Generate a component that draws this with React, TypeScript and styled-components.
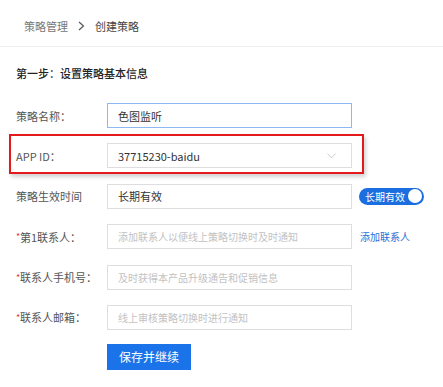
import React from "react";
import styled, { createGlobalStyle } from "styled-components";

const Global = createGlobalStyle`
  html, body { margin: 0; padding: 0; background: #fff; }
  body { font-family: "Noto Sans CJK SC", "Noto Sans", sans-serif; }
  * { box-sizing: border-box; }
`;

const Page = styled.div`
  width: 443px;
  height: 387px;
  background: #fff;
  overflow: hidden;
`;

const Header = styled.div`
  height: 47px;
  border-bottom: 1px solid #eeeeee;
  display: flex;
  align-items: center;
  padding: 5px 0 0 24px;
  font-size: 11px;
  gap: 9px;
`;

const Crumb = styled.span<{ $current?: boolean }>`
  color: ${(p) => (p.$current ? "#444" : "#777")};
`;

const Sep = styled.svg`
  width: 7px;
  height: 10px;
  margin: 0 1px;
`;

const Body = styled.div`
  padding: 18px 0 0 16px;
`;

const StepTitle = styled.div`
  font-size: 11px;
  color: #222;
  font-weight: 500;
  height: 16px;
  line-height: 16px;
  margin-bottom: 22px;
`;

const Form = styled.div`
  display: flex;
  flex-direction: column;
  gap: 15.4px;
`;

const Row = styled.div<{ $highlight?: boolean }>`
  position: relative;
  display: flex;
  align-items: center;
  height: 25px;
  width: ${(p) => (p.$highlight ? "336px" : "auto")};
  &::after {
    content: "";
    display: ${(p) => (p.$highlight ? "block" : "none")};
    position: absolute;
    left: -7px;
    right: -12px;
    top: -9px;
    bottom: -6px;
    border: 2px solid #e4191c;
    box-shadow: 2px 3px 4px rgba(0, 0, 0, 0.18);
    pointer-events: none;
  }
`;

const Label = styled.div`
  width: 91px;
  flex: none;
  font-size: 11px;
  color: #555;
  display: flex;
  align-items: center;
`;

const Star = styled.span`
  color: #e23a3a;
  font-size: 9px;
  width: 4px;
  line-height: 1;
`;

const Field = styled.div<{ $focus?: boolean; $placeholder?: boolean }>`
  width: 245px;
  height: 25px;
  flex: none;
  border: 1px solid ${(p) => (p.$focus ? "#8db8f2" : "#dedede")};
  background: #fff;
  display: flex;
  align-items: center;
  justify-content: space-between;
  padding: 0 12px 0 10px;
  font-size: ${(p) => (p.$placeholder ? "10px" : "11px")};
  color: ${(p) => (p.$placeholder ? "#c2c2c2" : "#333")};
`;

const Chevron = styled.svg`
  width: 9px;
  height: 6px;
  margin-right: 3px;
`;

const Toggle = styled.div`
  margin-left: 7px;
  width: 65px;
  height: 17px;
  border-radius: 9px;
  background: #1a6ee0;
  display: flex;
  align-items: center;
  justify-content: space-between;
  padding: 0 2px 0 6px;
  color: #fff;
  font-size: 10px;
`;

const Knob = styled.span`
  width: 14px;
  height: 14px;
  border-radius: 50%;
  background: #fff;
`;

const Link = styled.span`
  margin-left: 8px;
  font-size: 10px;
  color: #2a6fd6;
`;

const Button = styled.button`
  margin: 14px 0 0 91px;
  width: 84px;
  height: 26px;
  border: none;
  background: #1a73e8;
  color: #fff;
  font-family: inherit;
  font-size: 12px;
  padding: 0;
`;

export default function App() {
  return (
    <Page>
      <Global />
      <Header>
        <Crumb>策略管理</Crumb>
        <Sep viewBox="0 0 7 10">
          <path d="M1 1 L5.5 5 L1 9" fill="none" stroke="#555" strokeWidth="1.2" />
        </Sep>
        <Crumb $current>创建策略</Crumb>
      </Header>
      <Body>
        <StepTitle>第一步：设置策略基本信息</StepTitle>
        <Form>
          <Row>
            <Label>策略名称：</Label>
            <Field $focus>色图监听</Field>
          </Row>
          <Row $highlight>
            <Label>APP ID：</Label>
            <Field>
              37715230-baidu
              <Chevron viewBox="0 0 9 6">
                <path d="M0.5 0.5 L4.5 5 L8.5 0.5" fill="none" stroke="#cfcfcf" strokeWidth="1" />
              </Chevron>
            </Field>
          </Row>
          <Row>
            <Label>策略生效时间</Label>
            <Field>长期有效</Field>
            <Toggle>
              长期有效
              <Knob />
            </Toggle>
          </Row>
          <Row>
            <Label>
              <Star>*</Star>第1联系人：
            </Label>
            <Field $placeholder>添加联系人以便线上策略切换时及时通知</Field>
            <Link>添加联系人</Link>
          </Row>
          <Row>
            <Label>
              <Star>*</Star>联系人手机号：
            </Label>
            <Field $placeholder>及时获得本产品升级通告和促销信息</Field>
          </Row>
          <Row>
            <Label>
              <Star>*</Star>联系人邮箱：
            </Label>
            <Field $placeholder>线上审核策略切换时进行通知</Field>
          </Row>
        </Form>
        <Button>保存并继续</Button>
      </Body>
    </Page>
  );
}
